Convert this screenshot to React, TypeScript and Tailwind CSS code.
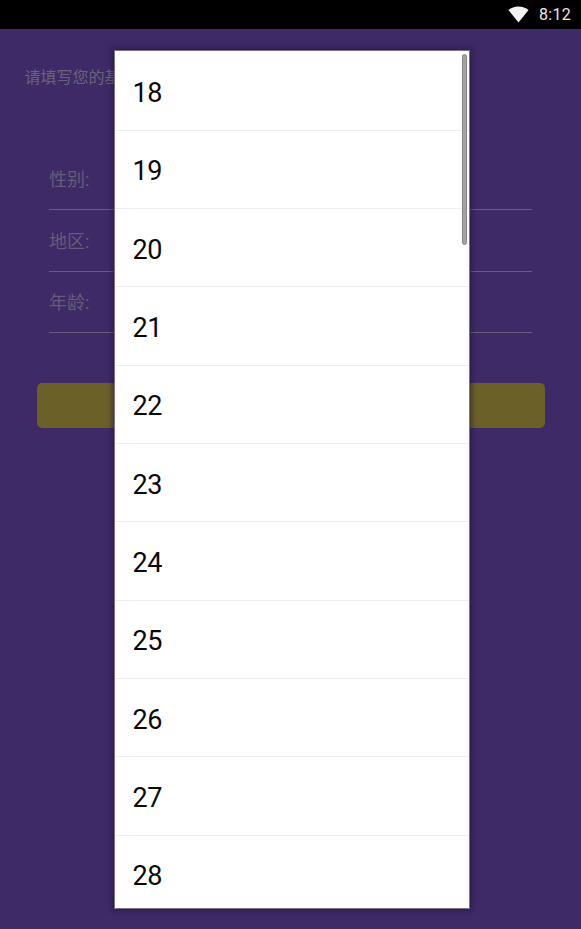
const ages = [18, 19, 20, 21, 22, 23, 24, 25, 26, 27, 28];
const fields = ['性别:', '地区:', '年龄:'];

function WifiIcon() {
    return (
        <svg width="21" height="17" viewBox="0 0 23 18" preserveAspectRatio="none" className="block">
            <path d="M11.5 17.5 L0.5 4.2 C3.5 1.8 7.2 0.4 11.5 0.4 C15.8 0.4 19.5 1.8 22.5 4.2 Z" fill="#f2f2f2" />
        </svg>
    );
}

export default function App() {
    return (
        <div className="relative h-[929px] w-[581px] overflow-hidden bg-[#3e2a67] font-['Roboto','Noto_Sans_CJK_SC',sans-serif]">
            <div className="flex h-[29px] items-center justify-end gap-[10px] bg-black pr-[10px]">
                <WifiIcon />
                <span className="text-[16px] tracking-[0.3px] text-[#e8e8e8]">8:12</span>
            </div>

            <p className="pl-[24.5px] pt-[39px] text-[16px] leading-[20px] text-[#6b6278]">请填写您的基本信息</p>

            <div className="flex flex-col px-[49px] pt-[60.5px]">
                {fields.map((field) => (
                    <div key={field} className="flex h-[61.5px] items-center border-b border-[#685d7e] pt-[2px] text-[18px] text-[#655c78]">
                        {field}
                    </div>
                ))}
            </div>

            <div className="mx-[36.5px] mt-[50px] h-[45px] rounded-[5px] bg-[#6c6029]" />

            <div className="absolute left-[114px] top-[50px] h-[859px] w-[356px] overflow-hidden border border-[#7b7388] bg-white shadow-[0_0_5px_2px_rgba(30,20,50,0.55)]">
                <ul className="pt-[1.5px]">
                    {ages.map((age) => (
                        <li key={age} className="flex h-[78.33px] items-center border-b border-[#eeeeee] pl-[17.5px] pt-[4px] text-[27px] tracking-[-0.3px] text-[#0a0a0a]">
                            {age}
                        </li>
                    ))}
                </ul>
                <div className="absolute right-[2px] top-[3px] h-[191px] w-[5px] rounded-full border border-[#858585] bg-[#a3a3a3]" />
            </div>
        </div>
    );
}
